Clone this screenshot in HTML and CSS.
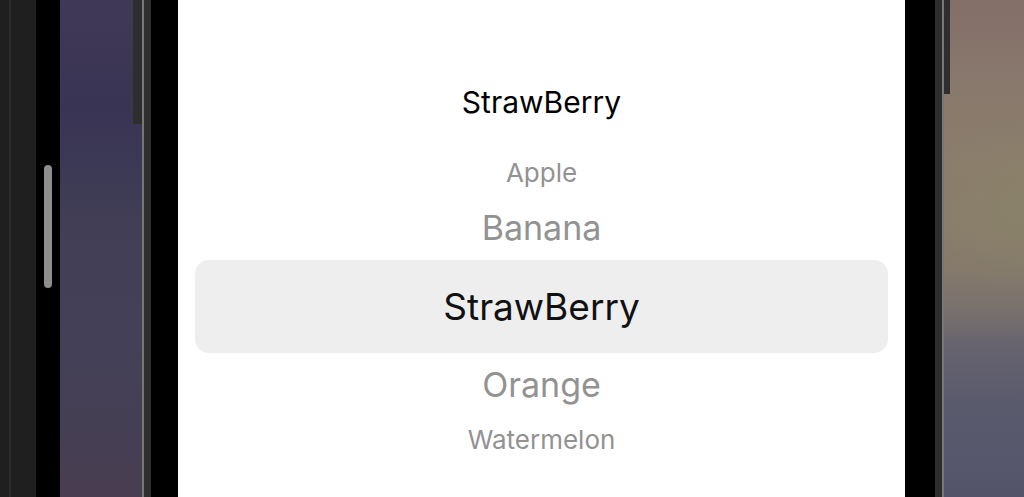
FILE: index.html
```html
<!DOCTYPE html>
<html lang="en">
<head>
    <meta charset="UTF-8">
    <meta name="viewport" content="width=device-width, initial-scale=1.0">
    <title>Fruit Picker</title>
    <link rel="stylesheet" href="styles.css">
</head>
<body>
    <div class="editor">
        <div class="gutter"></div>
        <div class="minimap"></div>
    </div>
    <div class="scrollbar">
        <div class="thumb"></div>
    </div>
    <main class="desktop">
        <div class="phone">
            <span class="side-button left"></span>
            <span class="side-button right"></span>
            <div class="bezel">
                <div class="screen">
                    <p class="result">StrawBerry</p>
                    <form class="picker">
                        <label class="option far"><input type="radio" name="fruit" value="Apple">Apple</label>
                        <label class="option near"><input type="radio" name="fruit" value="Banana">Banana</label>
                        <label class="option selected"><input type="radio" name="fruit" value="StrawBerry" checked>StrawBerry</label>
                        <label class="option near"><input type="radio" name="fruit" value="Orange">Orange</label>
                        <label class="option far"><input type="radio" name="fruit" value="Watermelon">Watermelon</label>
                    </form>
                </div>
            </div>
        </div>
    </main>
</body>
</html>
```

FILE: styles.css
```css
* {
    box-sizing: border-box;
}
body {
    display: flex;
    min-height: 100vh;
    margin: 0;
    background: #000;
    font-family: Inter, "Liberation Sans", sans-serif;
}

/* editor window on the left */
.editor {
    display: flex;
    width: 36px;
    background: #1f1f1f;
}
.gutter {
    width: 11px;
    border-right: 2px solid #2b2b2b;
}
.scrollbar {
    display: flex;
    justify-content: center;
    align-items: flex-start;
    width: 24px;
    padding-top: 165px;
}
.thumb {
    width: 8px;
    height: 123px;
    border-radius: 4px;
    background: #8e8e8e;
}

/* wallpaper behind the phone */
.desktop {
    display: flex;
    flex: 1;
    padding: 0 80px 0 82px;
    background:
        linear-gradient(to bottom, #403957 0%, #3a3454 22%, #3b3955 33%, #413e55 45%, #434057 68%, #453f53 86%, #483d51 100%) left / 50% 100% no-repeat,
        radial-gradient(circle at 100% 200px, rgba(138, 131, 104, 0.7), rgba(138, 131, 104, 0) 90px),
        linear-gradient(to bottom, #846e68 0%, #88786d 16%, #8b7d6c 32%, #897e6b 46%, #857a6b 54%, #7a716e 62%, #66636f 70%, #5b5b6d 80%, #53546b 100%) right / 50% 100% no-repeat;
}

/* phone body */
.phone {
    position: relative;
    display: flex;
    flex: 1;
    padding: 0 7px;
    border: solid #777;
    border-width: 0 2px;
    background: #2e2e2e;
}
.side-button {
    position: absolute;
    top: 0;
    background: #2e2e2e;
}
.side-button.left {
    right: 100%;
    width: 9px;
    height: 124px;
    margin-right: 2px;
}
.side-button.right {
    left: 100%;
    width: 6px;
    height: 94px;
    margin-left: 2px;
}
.bezel {
    display: flex;
    flex: 1;
    padding: 0 30px 0 27px;
    background: #000;
}
.screen {
    flex: 1;
    padding: 82px 17px 0;
    background: #fff;
    text-align: center;
}
.result {
    margin: 0 0 28px;
    font-size: 30px;
    line-height: 40px;
    color: #000;
}

/* wheel picker */
.picker {
    display: flex;
    flex-direction: column;
}
.option {
    color: #929292;
    cursor: pointer;
}
.option input {
    appearance: none;
    width: 0;
    height: 0;
    margin: 0;
}
.far {
    font-size: 26px;
    line-height: 46px;
}
.near {
    font-size: 34px;
    line-height: 64px;
}
.selected {
    border-radius: 14px;
    background: #eee;
    font-size: 37px;
    line-height: 93px;
    color: #111;
}
```
